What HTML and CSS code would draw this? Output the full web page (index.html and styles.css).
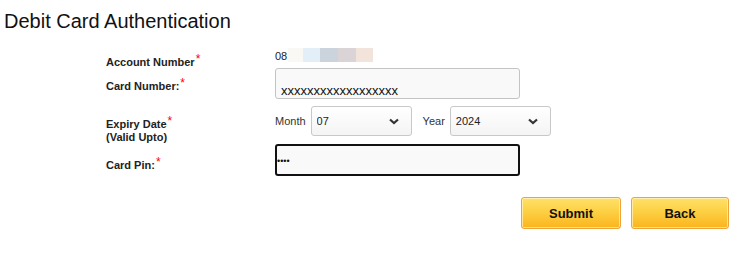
FILE: index.html
```html
<!DOCTYPE html>
<html lang="en">
<head>
  <meta charset="UTF-8">
  <title>Debit Card Authentication</title>
  <link rel="stylesheet" href="styles.css">
</head>
<body>

  <h1 class="title">Debit Card Authentication</h1>

  <form class="auth-form">
    <!-- Account -->
    <div class="row row-account">
      <div class="label">Account Number<span class="req">*</span></div>
      <div class="value account-value">
        <span class="acc-no">08</span>
        <span class="mask m1"></span><span class="mask m2"></span><span class="mask m3"></span><span class="mask m4"></span><span class="mask m5"></span>
      </div>
    </div>

    <!-- Card number -->
    <div class="row row-card">
      <div class="label">Card Number:<span class="req">*</span></div>
      <div class="value">
        <input type="text" class="card-input" value="xxxxxxxxxxxxxxxxxx">
      </div>
    </div>

    <!-- Expiry -->
    <div class="row row-expiry">
      <div class="label">Expiry Date<span class="req">*</span><br>(Valid Upto)</div>
      <div class="value expiry">
        <span class="sub-label">Month</span>
        <div class="select-wrap">
          <select class="select">
            <option>07</option>
          </select>
          <svg class="chevron" width="10" height="7" viewBox="0 0 10 7"><path d="M1 1.5 L5 5 L9 1.5" fill="none" stroke="#333" stroke-width="2.2"/></svg>
        </div>
        <span class="sub-label year-label">Year</span>
        <div class="select-wrap">
          <select class="select">
            <option>2024</option>
          </select>
          <svg class="chevron" width="10" height="7" viewBox="0 0 10 7"><path d="M1 1.5 L5 5 L9 1.5" fill="none" stroke="#333" stroke-width="2.2"/></svg>
        </div>
      </div>
    </div>

    <!-- Pin -->
    <div class="row row-pin">
      <div class="label">Card Pin:<span class="req">*</span></div>
      <div class="value">
        <input type="password" class="pin-input" value="1234">
      </div>
    </div>

    <div class="actions">
      <button type="button" class="btn">Submit</button>
      <button type="button" class="btn btn-back">Back</button>
    </div>
  </form>

</body>
</html>
```

FILE: styles.css
```css
body {
  margin: 0;
  font-family: "Liberation Sans", Arial, sans-serif;
  background: #fff;
  color: #222;
}

.title {
  margin: 0;
  padding: 10px 0 0 4px;
  font-size: 20px;
  font-weight: normal;
  line-height: 23px;
  color: #111;
}

.auth-form {
  margin: 15px 0 0 106px;
}

.row {
  display: flex;
}

.label {
  width: 169px;
  font-size: 11px;
  font-weight: bold;
  line-height: 13px;
  color: #222;
}

.req {
  color: #f00;
  font-weight: normal;
  font-size: 12px;
  position: relative;
  top: -3px;
  margin-left: 1px;
}

/* account */
.row-account {
  height: 20px;
}

.row-account .label {
  padding-top: 8px;
}

.account-value {
  display: flex;
  align-items: flex-start;
  height: 14px;
}

.acc-no {
  font-size: 11px;
  line-height: 13px;
  padding-top: 2px;
  margin-right: 1px;
  color: #222;
}

.mask {
  display: inline-block;
  height: 14px;
}

.m1 { width: 15px; background: #f9f8f4; }
.m2 { width: 17px; background: #e2eef8; }
.m3 { width: 18px; background: #cbd3dc; }
.m4 { width: 18px; background: #dbd4d6; }
.m5 { width: 17px; background: #f2e4da; }

/* card number */
.row-card .label {
  padding-top: 12px;
}

.card-input {
  box-sizing: border-box;
  width: 245px;
  height: 31px;
  margin: 0;
  padding: 13px 5px 0;
  border: 1px solid #c4c4c4;
  border-radius: 3px;
  background: #f9f9f9;
  font-family: "Liberation Sans", Arial, sans-serif;
  font-size: 13px;
  color: #111;
  outline: none;
}

/* expiry */
.row-expiry {
  margin-top: 7px;
  height: 38px;
}

.row-expiry .label {
  padding-top: 12px;
}

.expiry {
  display: flex;
  align-items: flex-start;
}

.sub-label {
  font-size: 11px;
  line-height: 30px;
  color: #333;
  margin-right: 5px;
}

.year-label {
  margin-left: 11px;
  margin-right: 5px;
}

.select-wrap {
  position: relative;
}

.select {
  -webkit-appearance: none;
  appearance: none;
  box-sizing: border-box;
  width: 101px;
  height: 30px;
  margin: 0;
  padding: 0 5px;
  border: 1px solid #c8c8c8;
  border-radius: 3px;
  background: linear-gradient(#fff, #f4f4f4);
  font-family: "Liberation Sans", Arial, sans-serif;
  font-size: 11px;
  color: #222;
}

.chevron {
  position: absolute;
  right: 13px;
  top: 12px;
  pointer-events: none;
}

/* pin */
.row-pin .label {
  padding-top: 15px;
}

.pin-input {
  box-sizing: border-box;
  width: 245px;
  height: 32px;
  margin: 0;
  padding: 2px 0 0 0;
  border: 2px solid #111;
  border-radius: 3px;
  background: #f9f9f9;
  font-family: "Liberation Sans", Arial, sans-serif;
  font-size: 9px;
  color: #111;
  outline: none;
}

/* buttons */
.actions {
  display: flex;
  gap: 10px;
  margin-top: 21px;
  padding-left: 415px;
}

.btn {
  box-sizing: border-box;
  width: 100px;
  height: 32px;
  margin: 0;
  padding: 0;
  border: 1px solid #efa43a;
  border-radius: 3px;
  background: linear-gradient(#ffe169 0%, #fdd044 45%, #fbb41c 100%);
  box-shadow: inset 0 0 0 1px rgba(255, 245, 200, 0.7);
  font-family: "Liberation Sans", Arial, sans-serif;
  font-size: 13px;
  font-weight: bold;
  color: #111;
  cursor: pointer;
}

.btn-back {
  width: 98px;
}
```
